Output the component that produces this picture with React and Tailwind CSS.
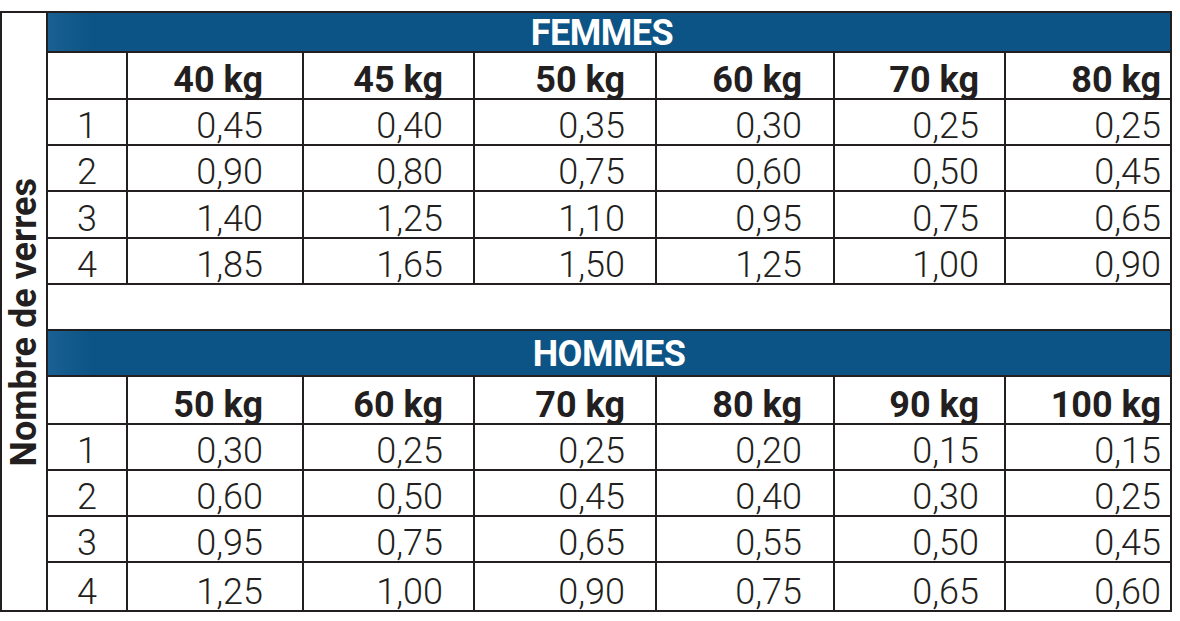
import React from "react";

const femmesHead = ["40 kg", "45 kg", "50 kg", "60 kg", "70 kg", "80 kg"];
const femmesRows = [
  ["0,45", "0,40", "0,35", "0,30", "0,25", "0,25"],
  ["0,90", "0,80", "0,75", "0,60", "0,50", "0,45"],
  ["1,40", "1,25", "1,10", "0,95", "0,75", "0,65"],
  ["1,85", "1,65", "1,50", "1,25", "1,00", "0,90"],
];
const hommesHead = ["50 kg", "60 kg", "70 kg", "80 kg", "90 kg", "100 kg"];
const hommesRows = [
  ["0,30", "0,25", "0,25", "0,20", "0,15", "0,15"],
  ["0,60", "0,50", "0,45", "0,40", "0,30", "0,25"],
  ["0,95", "0,75", "0,65", "0,55", "0,50", "0,45"],
  ["1,25", "1,00", "0,90", "0,75", "0,65", "0,60"],
];
const pads = ["pr-[39px]", "pr-[30px]", "pr-[30px]", "pr-[31px]", "pr-[25px]", "pr-[9px]"];

function HeaderRow({ heads }) {
  return (
    <>
      <div className="bg-white" />
      {heads.map((h, i) => (
        <div
          key={i}
          className={`bg-white flex items-end justify-end ${pads[i]} text-[36px] leading-none font-bold whitespace-nowrap`}
        >
          {h}
        </div>
      ))}
    </>
  );
}

function DataRows({ rows }) {
  return rows.map((r, ri) => (
    <React.Fragment key={ri}>
      <div className="bg-white flex items-end justify-center text-[36px] leading-none font-light">
        {ri + 1}
      </div>
      {r.map((v, i) => (
        <div
          key={i}
          className={`bg-white flex items-end justify-end ${pads[i]} text-[36px] leading-none font-light`}
        >
          {v}
        </div>
      ))}
    </React.Fragment>
  ));
}

export default function App() {
  return (
    <div className="w-[1180px] h-[621px] bg-white pt-[11px] text-[#231f20] font-[Roboto,Arial,sans-serif]">
      <div className="flex h-[601px] w-[1172px]">
        <div className="w-[46px] border-l-2 border-y-2 border-[#231f20] flex items-center justify-center pt-[21px]">
          <span className="[writing-mode:vertical-rl] rotate-180 font-bold text-[36px] leading-none whitespace-nowrap">
            Nombre de verres
          </span>
        </div>
        <div className="w-[1126px] grid grid-cols-[78px_174px_169px_180px_176px_169px_164px] grid-rows-[38px_45px_44px_44px_45px_44px_44px_44px_46px_44px_44px_44px_47px] gap-[2px] p-[2px] bg-[#231f20]">
          <div className="col-span-7 flex items-end justify-center pr-[14px] bg-[linear-gradient(90deg,#1a6092_0%,#0c5485_4%,#0c5485_100%)] text-white font-bold text-[36px] leading-none tracking-[-0.5px]">
            FEMMES
          </div>
          <HeaderRow heads={femmesHead} />
          <DataRows rows={femmesRows} />
          <div className="col-span-7 bg-white" />
          <div className="col-span-7 flex items-end justify-center pb-[3px] bg-[linear-gradient(90deg,#1a6092_0%,#0c5485_4%,#0c5485_100%)] text-white font-bold text-[36px] leading-none tracking-[-0.5px]">
            HOMMES
          </div>
          <HeaderRow heads={hommesHead} />
          <DataRows rows={hommesRows} />
        </div>
      </div>
    </div>
  );
}
